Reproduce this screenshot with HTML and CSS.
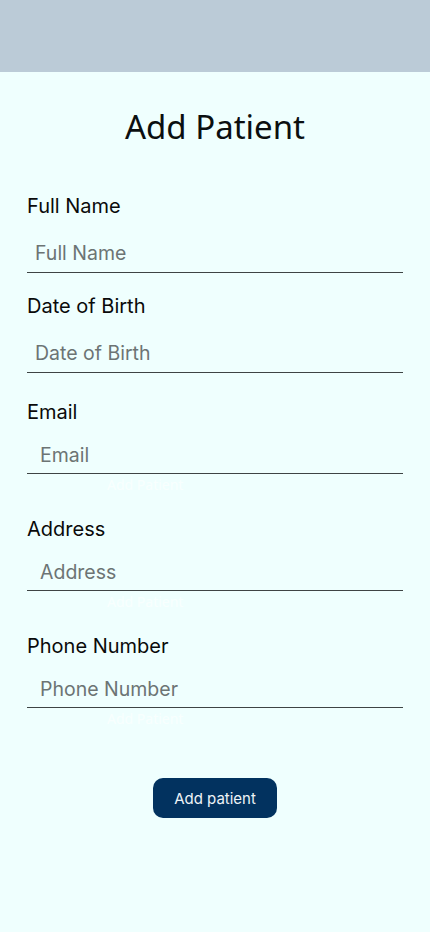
FILE: index.html
```html
<!DOCTYPE html>
<html>
<head>
<meta charset="utf-8">
<link rel="stylesheet" href="styles.css">
</head>
<body>
<header class="topbar"></header>
<main class="page">
  <h1 class="title">Add Patient</h1>
  <form class="form">
    <div class="field">
      <label class="label">Full Name</label>
      <div class="input">Full Name</div>
    </div>
    <div class="field field-gap">
      <label class="label">Date of Birth</label>
      <div class="input">Date of Birth</div>
    </div>
    <div class="field field-wide">
      <label class="label">Email</label>
      <div class="input">Email</div>
      <div class="ghost">Add Patient</div>
    </div>
    <div class="field field-wide">
      <label class="label">Address</label>
      <div class="input">Address</div>
      <div class="ghost">Add Patient</div>
    </div>
    <div class="field field-wide">
      <label class="label">Phone Number</label>
      <div class="input">Phone Number</div>
      <div class="ghost">Add Patient</div>
    </div>
    <div class="actions">
      <button type="button" class="btn">Add patient</button>
    </div>
  </form>
</main>
</body>
</html>
```
FILE: styles.css
```css
* { box-sizing: border-box; }
html, body { margin: 0; padding: 0; }
body {
  width: 430px;
  height: 932px;
  background: #effffe;
  font-family: Inter, "Liberation Sans", sans-serif;
  overflow: hidden;
}
.topbar {
  height: 72px;
  background: #bbcbd7;
}
.page {
  padding: 0 27px;
}
.title {
  margin: 0;
  padding-top: 30px;
  height: 86px;
  text-align: center;
  font-family: "Noto Sans", sans-serif;
  font-weight: 400;
  font-size: 33px;
  line-height: 50px;
  color: #0b0f10;
}
.form {
  display: flex;
  flex-direction: column;
  padding-top: 36px;
}
.field {
  display: flex;
  flex-direction: column;
  margin-bottom: 21px;
}
.field-gap { margin-bottom: 27px; }
.label {
  font-size: 20px;
  line-height: 24px;
  color: #0a0a0a;
}
.input {
  margin-top: 23px;
  padding: 0 8px 7px;
  font-size: 19.5px;
  line-height: 24px;
  color: #6c7474;
  border-bottom: 1px solid #3e4444;
}
.field-wide .input {
  margin-top: 19px;
  padding-left: 13px;
  padding-bottom: 6px;
}
.ghost {
  padding-left: 80px;
  padding-top: 2px;
  font-family: "Noto Sans", sans-serif;
  font-size: 14px;
  line-height: 18px;
  color: rgba(255,255,255,0.6);
  margin-bottom: 2px;
}
.actions {
  display: flex;
  justify-content: center;
  padding-top: 27px;
}
.btn {
  width: 124px;
  height: 40px;
  border: none;
  border-radius: 10px;
  background: #02325f;
  color: #eef3f7;
  font-family: Inter, sans-serif;
  font-size: 15px;
}
```
